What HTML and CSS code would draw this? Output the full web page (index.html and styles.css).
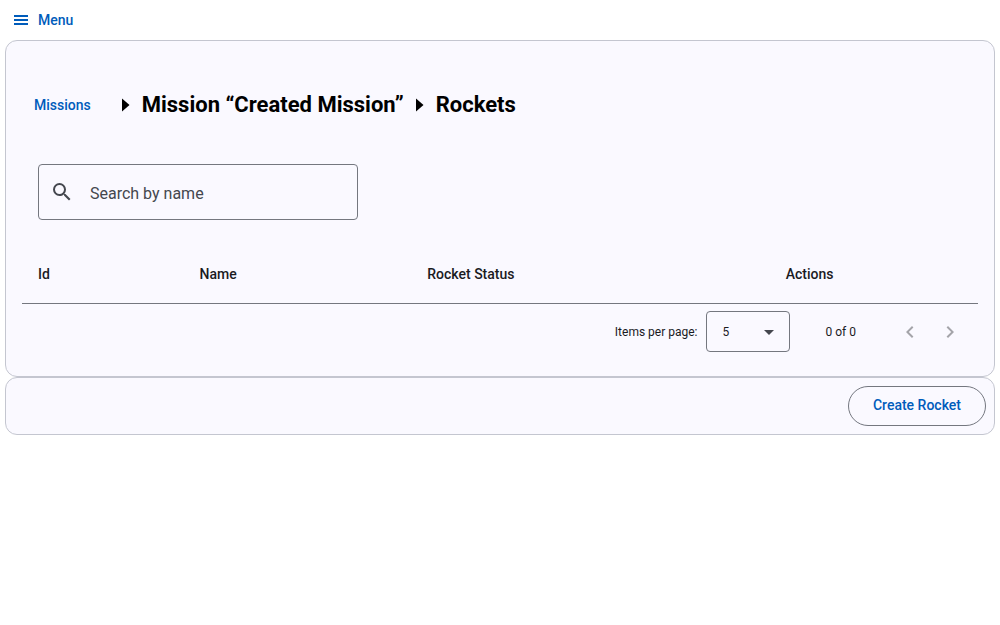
FILE: index.html
```html
<!DOCTYPE html>
<html lang="en">
<head>
<meta charset="utf-8">
<meta name="viewport" content="width=device-width, initial-scale=1">
<title>Rockets</title>
<link rel="stylesheet" href="styles.css">
</head>
<body>
<header class="toolbar">
  <button class="menu-button" type="button">
    <svg class="menu-icon" viewBox="0 0 18 18" aria-hidden="true"><path d="M2 4h14v2H2zM2 8h14v2H2zM2 12h14v2H2z"/></svg>
    <span>Menu</span>
  </button>
</header>
<main class="page">
  <section class="card card-content">
    <nav class="breadcrumb" aria-label="Breadcrumb">
      <a class="breadcrumb-link" href="#missions">Missions</a>
      <h1 class="breadcrumb-title">
        <svg class="breadcrumb-arrow" viewBox="0 0 8 14" aria-hidden="true"><path d="M0 0.5l7.5 6.5-7.5 6.5z"/></svg>
        <span>Mission “Created Mission”</span>
        <svg class="breadcrumb-arrow" viewBox="0 0 8 14" aria-hidden="true"><path d="M0 0.5l7.5 6.5-7.5 6.5z"/></svg>
        <span>Rockets</span>
      </h1>
    </nav>
    <label class="search">
      <svg class="search-icon" viewBox="0 0 24 24" aria-hidden="true"><path d="M15.5 14h-.79l-.28-.27A6.471 6.471 0 0 0 16 9.5 6.5 6.5 0 1 0 9.5 16c1.61 0 3.09-.59 4.23-1.57l.27.28v.79l5 4.99L20.49 19l-4.99-5zm-6 0C7.01 14 5 11.99 5 9.5S7.01 5 9.5 5 14 7.01 14 9.5 11.99 14 9.5 14z"/></svg>
      <input class="search-input" type="text" placeholder="Search by name" aria-label="Search by name">
    </label>
    <table class="rockets">
      <thead>
        <tr>
          <th class="sortable" scope="col">Id</th>
          <th class="sortable" scope="col">Name</th>
          <th class="sortable" scope="col">Rocket Status</th>
          <th scope="col">Actions</th>
        </tr>
      </thead>
      <tbody></tbody>
    </table>
    <div class="paginator">
      <label class="paginator-label" for="page-size">Items per page:</label>
      <div class="page-size">
        <select class="page-size-select" id="page-size">
          <option>5</option>
          <option>10</option>
          <option>20</option>
        </select>
        <svg class="page-size-arrow" viewBox="0 0 10 5" aria-hidden="true"><path d="M0 0h10L5 5z"/></svg>
      </div>
      <span class="paginator-range">0 of 0</span>
      <button class="page-button" type="button" aria-label="Previous page" disabled>
        <svg class="page-icon" viewBox="0 0 24 24" aria-hidden="true"><path d="M15.41 7.41L14 6l-6 6 6 6 1.41-1.41L10.83 12z"/></svg>
      </button>
      <button class="page-button" type="button" aria-label="Next page" disabled>
        <svg class="page-icon" viewBox="0 0 24 24" aria-hidden="true"><path d="M10 6L8.59 7.41 13.17 12l-4.58 4.59L10 18l6-6z"/></svg>
      </button>
    </div>
  </section>
  <section class="card card-actions">
    <button class="create-button" type="button">Create Rocket</button>
  </section>
</main>
</body>
</html>
```
FILE: styles.css
```css
* {
  box-sizing: border-box;
}

body {
  margin: 0;
  background: #fff;
  color: #1a1b1f;
  font-family: Roboto, "Liberation Sans", sans-serif;
  font-size: 14px;
  line-height: 20px;
}

button,
input,
select {
  font: inherit;
}

svg {
  flex: none;
  fill: currentColor;
}

.toolbar {
  display: flex;
}

.menu-button {
  display: flex;
  align-items: center;
  gap: 8px;
  height: 40px;
  padding: 0 12px;
  border: 0;
  background: none;
  color: #005cbb;
  font-weight: 500;
}

.menu-icon {
  width: 18px;
  height: 18px;
}

.page {
  padding: 0 5px;
}

.card {
  border: 1px solid #c4c6d0;
  border-radius: 12px;
  background: #faf9ff;
}

.card-content {
  padding: 16px;
}

.breadcrumb {
  display: flex;
  align-items: center;
  gap: 31px;
  padding: 32px 12px;
}

.breadcrumb-link {
  color: #005cbb;
  font-weight: 500;
  text-decoration: none;
}

.breadcrumb-title {
  display: flex;
  align-items: center;
  gap: 12px;
  margin: 0;
  color: #000;
  font-size: 22px;
  font-weight: 700;
  line-height: 32px;
}

.breadcrumb-arrow {
  width: 8px;
  height: 14px;
}

.search {
  display: flex;
  align-items: center;
  width: 320px;
  max-width: 100%;
  height: 56px;
  margin: 11px 16px 27px;
  padding: 0 12px 0 11px;
  gap: 16px;
  border: 1px solid #74777f;
  border-radius: 4px;
  color: #44474e;
}

.search-icon {
  width: 24px;
  height: 24px;
}

.search-input {
  flex: 1;
  min-width: 0;
  height: 100%;
  padding: 2px 0 0;
  border: 0;
  outline: 0;
  background: none;
  color: #1a1b1f;
  font-size: 16px;
}

.search-input::placeholder {
  color: #44474e;
  opacity: 1;
}

.rockets {
  width: 100%;
  border-collapse: separate;
  border-spacing: 0;
}

.rockets th {
  height: 57px;
  padding: 0 16px 2px;
  border-bottom: 1px solid #74777f;
  font-weight: 500;
  text-align: left;
}

.rockets .sortable {
  padding-right: 34px;
}

.paginator {
  display: flex;
  align-items: center;
  justify-content: flex-end;
  height: 56px;
  padding: 0 8px;
  font-size: 12px;
}

.page-size {
  position: relative;
  width: 84px;
  margin: 0 36px 1px 8px;
}

.page-size-select {
  display: block;
  width: 100%;
  height: 41px;
  padding: 0 16px;
  border: 1px solid #74777f;
  border-radius: 4px;
  appearance: none;
  background: none;
  color: inherit;
}

.page-size-arrow {
  position: absolute;
  top: 19px;
  right: 16px;
  width: 10px;
  height: 5px;
  color: #44474e;
  pointer-events: none;
}

.paginator-range {
  margin-right: 34px;
}

.page-button {
  display: flex;
  align-items: center;
  justify-content: center;
  width: 40px;
  height: 40px;
  padding: 0;
  border: 0;
  background: none;
  color: #a4a4a9;
}

.page-icon {
  width: 24px;
  height: 24px;
}

.card-actions {
  display: flex;
  justify-content: flex-end;
  padding: 8px;
}

.create-button {
  height: 40px;
  padding: 0 24px 2px;
  border: 1px solid #74777f;
  border-radius: 20px;
  background: none;
  color: #005cbb;
  font-weight: 500;
}
```
